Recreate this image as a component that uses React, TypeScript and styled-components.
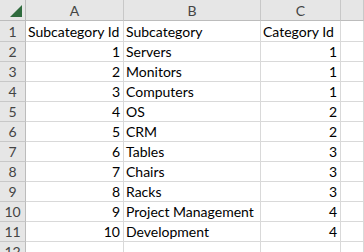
import React from 'react';
import styled, { createGlobalStyle } from 'styled-components';

const GlobalStyle = createGlobalStyle`
  html, body {
    margin: 0;
    padding: 0;
    background: #ffffff;
  }
  body {
    font-family: "Lato", "Liberation Sans", sans-serif;
    overflow: hidden;
  }
`;

const Sheet = styled.div`
  display: grid;
  grid-template-columns: 26px 98px 137px 80px 1fr;
  grid-auto-rows: 20px;
  grid-template-rows: 21px 21px;
  width: 364px;
  height: 252px;
  overflow: hidden;
  background: #ffffff;
`;

const Corner = styled.div`
  position: relative;
  background: #e6e6e6;
  border-right: 1px solid #bcbcbc;
  border-bottom: 1px solid #bcbcbc;

  &::after {
    content: '';
    position: absolute;
    right: 3px;
    bottom: 3px;
    width: 0;
    height: 0;
    border-left: 12px solid transparent;
    border-bottom: 12px solid #2f6b3d;
  }
`;

const ColHead = styled.div`
  background: #e6e6e6;
  border-right: 1px solid #c8c8c8;
  border-bottom: 1px solid #bcbcbc;
  color: #444444;
  font-size: 14px;
  display: flex;
  align-items: flex-end;
  justify-content: center;
  padding-bottom: 1px;
`;

const RowHead = styled.div`
  background: #e6e6e6;
  border-right: 1px solid #bcbcbc;
  border-bottom: 1px solid #c8c8c8;
  color: #444444;
  font-size: 14px;
  display: flex;
  align-items: flex-end;
  justify-content: center;
  line-height: 18px;
`;

const Cell = styled.div<{ $num?: boolean }>`
  border-right: 1px solid #d9d9d9;
  border-bottom: 1px solid #d9d9d9;
  color: #000000;
  font-size: 14px;
  line-height: 18px;
  display: flex;
  align-items: flex-end;
  justify-content: ${({ $num }) => ($num ? 'flex-end' : 'flex-start')};
  padding: 0 3px 0 2px;
  white-space: nowrap;
  overflow: hidden;
`;

const rows: [string, string, string][] = [
  ['1', 'Servers', '1'],
  ['2', 'Monitors', '1'],
  ['3', 'Computers', '1'],
  ['4', 'OS', '2'],
  ['5', 'CRM', '2'],
  ['6', 'Tables', '3'],
  ['7', 'Chairs', '3'],
  ['8', 'Racks', '3'],
  ['9', 'Project Management', '4'],
  ['10', 'Development', '4'],
];

export default function App() {
  return (
    <>
      <GlobalStyle />
      <Sheet>
        <Corner />
        <ColHead>A</ColHead>
        <ColHead>B</ColHead>
        <ColHead>C</ColHead>
        <ColHead />

        <RowHead>1</RowHead>
        <Cell>Subcategory Id</Cell>
        <Cell>Subcategory</Cell>
        <Cell>Category Id</Cell>
        <Cell />

        {rows.map(([id, name, cat], i) => (
          <React.Fragment key={id}>
            <RowHead>{i + 2}</RowHead>
            <Cell $num>{id}</Cell>
            <Cell>{name}</Cell>
            <Cell $num>{cat}</Cell>
            <Cell />
          </React.Fragment>
        ))}

        <RowHead>12</RowHead>
        <Cell />
        <Cell />
        <Cell />
        <Cell />
      </Sheet>
    </>
  );
}
